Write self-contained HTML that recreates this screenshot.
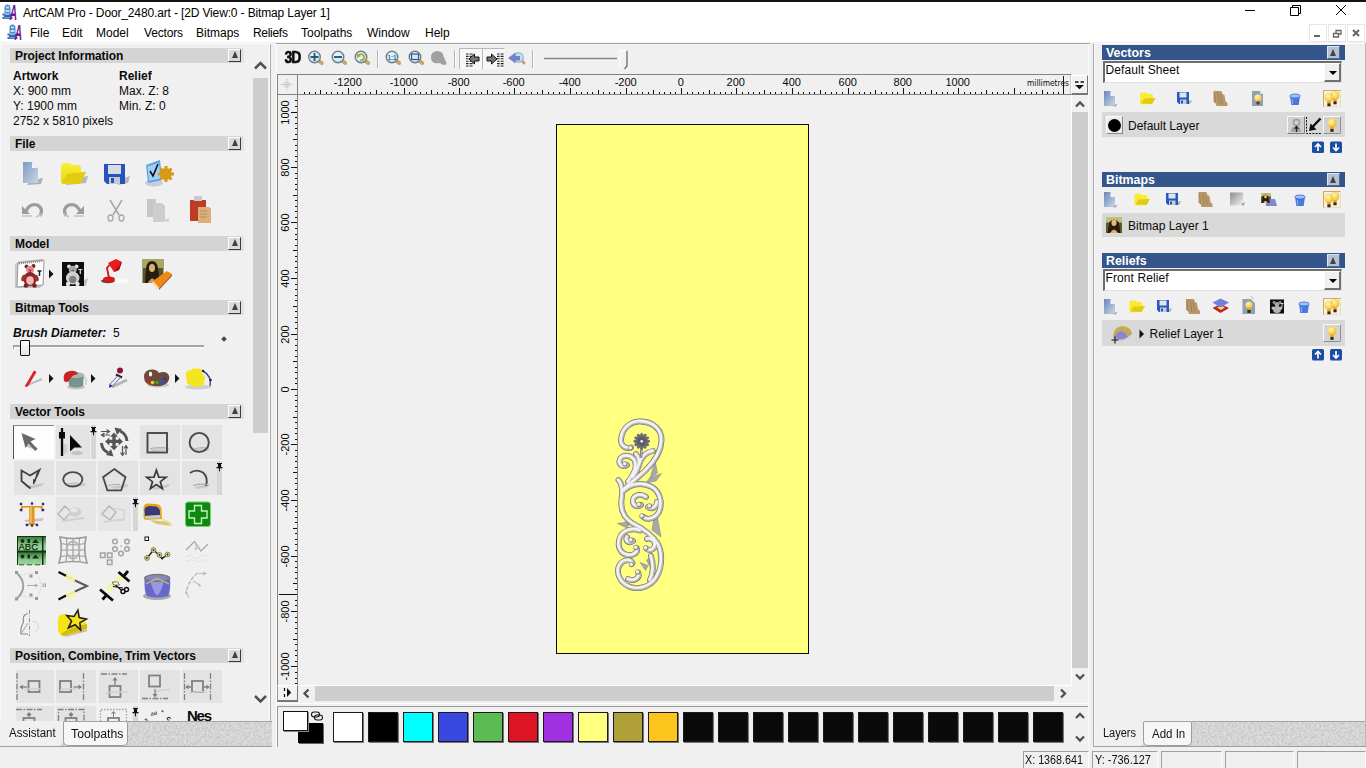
<!DOCTYPE html>
<html><head><meta charset="utf-8"><title>ArtCAM Pro</title>
<style>
html,body{margin:0;padding:0}
body{width:1366px;height:768px;position:relative;overflow:hidden;background:#f0f0f0;font-family:"Liberation Sans",sans-serif;font-size:12px;color:#000}
div,span,svg,b,i{position:absolute;box-sizing:border-box}
.t{white-space:nowrap}
.hd{left:10px;width:234px;height:15px;background:linear-gradient(90deg,#d4d4d4 0,#d4d4d4 231px,#e2e2e2 231px)}
.cb{width:13px;height:13px;background:#dadada;border:1px solid #fff;border-right-color:#3c3c3c;border-bottom-color:#3c3c3c}
.cb i{left:2.5px;top:0.5px;width:0;height:0;border-left:3.5px solid transparent;border-right:3.5px solid transparent;border-bottom:7.5px solid #404040}
.rh{left:1102px;width:243px;height:15px;background:#34558b}
.cb2{width:13px;height:13px;background:#b4c0d4;border:1px solid #dfe6f0;border-right-color:#5a6a86;border-bottom-color:#5a6a86}
.cb2 i{left:2px;top:2px;width:0;height:0;border-left:3.5px solid transparent;border-right:3.5px solid transparent;border-bottom:7px solid #444}
.dd{left:1103px;width:239px;height:22px;background:#fff;border:1px solid #e0e0e0;border-top:2px solid #6d6d6d;border-left:2px solid #6d6d6d}
.ddb{width:17px;height:19px;background:#f0f0f0;border:1px solid #fff;border-right:2px solid #707070;border-bottom:2px solid #707070}
.ddb i{left:4px;top:7px;width:0;height:0;border-left:4px solid transparent;border-right:4px solid transparent;border-top:4px solid #000}
.lr{left:1102px;width:243px;height:25px;background:#d9d9d9}
.sw{top:712px;width:30px;height:30px;border:1px solid #1a1a1a;box-shadow:1px 1px 0 #777}
.ti{width:40px;height:34px;background:#e4e4e4}
</style></head><body>

<div style="left:0px;top:0px;width:1366px;height:2px;background:#141414;"></div>
<div style="left:0px;top:2px;width:1366px;height:40px;background:#fff;"></div>
<div style="left:0px;top:43px;width:272px;height:1px;background:#fbfbfb;"></div>
<div style="left:1094px;top:43px;width:272px;height:1px;background:#fbfbfb;"></div>
<svg style="left:2px;top:3px" width="16" height="17" viewBox="0 0 16 17"><path d="M2.500 10 L2.500 5 Q2.500 1.500 5.500 1.500 Q8.500 1.500 8.500 5 L8.500 10 Z" fill="#4a8ad0"/><path d="M4 3.500 h3 v2 h-3z M3.500 7 h4 v2 h-4z" fill="#bfe0f8"/><path d="M0.500 10.500 h9.500 v2 h-1 v1.500 h1.500 v2 h-10 v-2 h1.500 v-1.500 h-1.500 z" fill="#3468b4"/><path d="M2.500 11.500 h5 M2 14.800 h7" stroke="#9cc8f0" stroke-width="0.800"/><text x="11.300" y="16.500" text-anchor="middle" font-family="Liberation Sans,sans-serif" font-size="22.500" font-weight="bold" font-style="italic" fill="#6a1a8c" transform="translate(11.300 0) scale(0.450 1) translate(-11.300 0)">A</text></svg>
<svg style="left:7px;top:23px" width="16" height="17" viewBox="0 0 16 17"><path d="M2.500 10 L2.500 5 Q2.500 1.500 5.500 1.500 Q8.500 1.500 8.500 5 L8.500 10 Z" fill="#4a8ad0"/><path d="M4 3.500 h3 v2 h-3z M3.500 7 h4 v2 h-4z" fill="#bfe0f8"/><path d="M0.500 10.500 h9.500 v2 h-1 v1.500 h1.500 v2 h-10 v-2 h1.500 v-1.500 h-1.500 z" fill="#3468b4"/><path d="M2.500 11.500 h5 M2 14.800 h7" stroke="#9cc8f0" stroke-width="0.800"/><text x="11.300" y="16.500" text-anchor="middle" font-family="Liberation Sans,sans-serif" font-size="22.500" font-weight="bold" font-style="italic" fill="#6a1a8c" transform="translate(11.300 0) scale(0.450 1) translate(-11.300 0)">A</text></svg>
<div class="t" style="left:23px;top:7px;font-size:12px;line-height:12px;color:#000;letter-spacing:-0.14px;">ArtCAM Pro - Door_2480.art - [2D View:0 - Bitmap Layer 1]</div>
<div class="t" style="left:30px;top:27px;font-size:12px;line-height:12px;color:#000;">File</div>
<div class="t" style="left:62px;top:27px;font-size:12px;line-height:12px;color:#000;">Edit</div>
<div class="t" style="left:96px;top:27px;font-size:12px;line-height:12px;color:#000;">Model</div>
<div class="t" style="left:144px;top:27px;font-size:12px;line-height:12px;color:#000;letter-spacing:-0.15px;">Vectors</div>
<div class="t" style="left:196px;top:27px;font-size:12px;line-height:12px;color:#000;">Bitmaps</div>
<div class="t" style="left:253px;top:27px;font-size:12px;line-height:12px;color:#000;letter-spacing:-0.3px;">Reliefs</div>
<div class="t" style="left:301px;top:27px;font-size:12px;line-height:12px;color:#000;">Toolpaths</div>
<div class="t" style="left:367px;top:27px;font-size:12px;line-height:12px;color:#000;">Window</div>
<div class="t" style="left:425px;top:27px;font-size:12px;line-height:12px;color:#000;">Help</div>
<svg style="left:1240px;top:2px" width="126" height="20" viewBox="0 0 126 20" fill="none" stroke="#000" stroke-width="1"><path d="M5 8.5 H15"/><path d="M50.5 5.5 H58.5 V13.5 H50.5 Z" transform="translate(0,0)"/><path d="M52.5 5.5 V3.5 H60.5 V11.5 H58.5"/><path d="M96 3 L106 13 M106 3 L96 13"/></svg>
<div style="left:1309px;top:24px;width:18px;height:18px;background:#fff;border:1px solid #e6e6e6"></div>
<div style="left:1328px;top:24px;width:18px;height:18px;background:#fff;border:1px solid #e6e6e6"></div>
<div style="left:1347px;top:24px;width:18px;height:18px;background:#fff;border:1px solid #e6e6e6"></div>
<svg style="left:1309px;top:24px" width="57" height="18" viewBox="0 0 57 18" fill="none" stroke="#666" stroke-width="1.6"><path d="M5 12 H11" stroke-width="2"/><path d="M24.5 9.5 h5 v3.5 h-5 z M27 9 v-2.5 h5 v3.5 h-2" stroke-width="1.3"/><path d="M44 6 L50 12 M50 6 L44 12" stroke-width="2"/></svg>
<div style="left:0px;top:44px;width:1px;height:703px;background:#fafafa;"></div>
<div style="left:269px;top:44px;width:1px;height:677px;background:#fafafa;"></div>
<div style="left:270px;top:44px;width:1px;height:677px;background:#ababab;"></div>
<div class="hd" style="top:48px"></div>
<div class="t" style="left:15px;top:50px;font-size:12px;line-height:12px;color:#0a0a0a;font-weight:bold;letter-spacing:-0.1px;">Project Information</div>
<div class="cb" style="left:228px;top:49px"><i></i></div>
<div class="hd" style="top:136px"></div>
<div class="t" style="left:15px;top:138px;font-size:12px;line-height:12px;color:#0a0a0a;font-weight:bold;letter-spacing:-0.1px;">File</div>
<div class="cb" style="left:228px;top:137px"><i></i></div>
<div class="hd" style="top:236px"></div>
<div class="t" style="left:15px;top:238px;font-size:12px;line-height:12px;color:#0a0a0a;font-weight:bold;letter-spacing:-0.1px;">Model</div>
<div class="cb" style="left:228px;top:237px"><i></i></div>
<div class="hd" style="top:300px"></div>
<div class="t" style="left:15px;top:302px;font-size:12px;line-height:12px;color:#0a0a0a;font-weight:bold;letter-spacing:-0.1px;">Bitmap Tools</div>
<div class="cb" style="left:228px;top:301px"><i></i></div>
<div class="hd" style="top:404px"></div>
<div class="t" style="left:15px;top:406px;font-size:12px;line-height:12px;color:#0a0a0a;font-weight:bold;letter-spacing:-0.1px;">Vector Tools</div>
<div class="cb" style="left:228px;top:405px"><i></i></div>
<div class="hd" style="top:648px"></div>
<div class="t" style="left:15px;top:650px;font-size:12px;line-height:12px;color:#0a0a0a;font-weight:bold;letter-spacing:-0.1px;">Position, Combine, Trim Vectors</div>
<div class="cb" style="left:228px;top:649px"><i></i></div>
<div class="t" style="left:13px;top:70px;font-size:12px;line-height:12px;color:#0a0a0a;font-weight:bold;">Artwork</div>
<div class="t" style="left:119px;top:70px;font-size:12px;line-height:12px;color:#0a0a0a;font-weight:bold;">Relief</div>
<div class="t" style="left:13px;top:85px;font-size:12px;line-height:12px;color:#0a0a0a;">X: 900 mm</div>
<div class="t" style="left:119px;top:85px;font-size:12px;line-height:12px;color:#0a0a0a;">Max. Z: 8</div>
<div class="t" style="left:13px;top:100px;font-size:12px;line-height:12px;color:#0a0a0a;">Y: 1900 mm</div>
<div class="t" style="left:119px;top:100px;font-size:12px;line-height:12px;color:#0a0a0a;">Min. Z: 0</div>
<div class="t" style="left:13px;top:115px;font-size:12px;line-height:12px;color:#0a0a0a;">2752 x 5810 pixels</div>
<div class="t" style="left:13px;top:327px;font-size:12px;line-height:12px;color:#0a0a0a;font-weight:bold;font-style:italic;">Brush Diameter:</div>
<div class="t" style="left:113px;top:327px;font-size:12px;line-height:12px;color:#0a0a0a;">5</div>
<div style="left:13px;top:345px;width:191px;height:2px;background:#a4a4a4;"></div>
<div style="left:13px;top:347px;width:192px;height:1px;background:#fcfcfc;"></div>
<div style="left:13px;top:345px;width:1px;height:4px;background:#a4a4a4;"></div>
<div style="left:20px;top:340px;width:10px;height:16px;background:linear-gradient(180deg,#fff,#e4e4e4);border:1px solid #111;border-radius:1px"></div>
<div style="left:222px;top:337px;width:4px;height:4px;background:#3a4a6c;transform:rotate(45deg)"></div>
<div style="left:252px;top:56px;width:17px;height:653px;background:#f0f0f0;"></div>
<div style="left:253px;top:78px;width:15px;height:355px;background:#cdcdcd;"></div>
<svg style="left:252px;top:56px" width="17" height="653" viewBox="0 0 17 653" fill="none" stroke="#505050" stroke-width="2.500"><path d="M3 12.500 L8.500 7 L14 12.500"/><path d="M3 640 L8.500 645.500 L14 640"/></svg>
<div style="left:13px;top:425px;width:41px;height:34px;background:#fdfdfd;border-left:1px solid #555;border-top:1px solid #888"></div>
<div style="left:56px;top:425px;width:34px;height:34px;background:#e3e3e3;"></div>
<div style="left:91px;top:425px;width:5px;height:34px;background:#d6d6d6;"></div>
<div style="left:140px;top:425px;width:40px;height:34px;background:#e3e3e3;"></div>
<div style="left:181.5px;top:425px;width:40px;height:34px;background:#e3e3e3;"></div>
<div style="left:13.5px;top:461px;width:40.5px;height:34px;background:#e3e3e3;"></div>
<div style="left:56px;top:461px;width:40px;height:34px;background:#e3e3e3;"></div>
<div style="left:98px;top:461px;width:40px;height:34px;background:#e3e3e3;"></div>
<div style="left:140px;top:461px;width:40px;height:34px;background:#e3e3e3;"></div>
<div style="left:181.5px;top:461px;width:35px;height:34px;background:#e3e3e3;"></div>
<div style="left:217px;top:461px;width:5px;height:34px;background:#d6d6d6;"></div>
<div style="left:56px;top:497px;width:40px;height:34px;background:#e6e6e6;"></div>
<div style="left:98px;top:497px;width:33px;height:34px;background:#e6e6e6;"></div>
<div style="left:133px;top:497px;width:5px;height:34px;background:#d6d6d6;"></div>
<div style="left:15.5px;top:670px;width:38.5px;height:33px;background:#e3e3e3;"></div>
<div style="left:56px;top:670px;width:40px;height:33px;background:#e3e3e3;"></div>
<div style="left:98.5px;top:670px;width:39px;height:33px;background:#e3e3e3;"></div>
<div style="left:140px;top:670px;width:40px;height:33px;background:#e3e3e3;"></div>
<div style="left:181.5px;top:670px;width:40px;height:33px;background:#e3e3e3;"></div>
<div style="left:15.5px;top:705.5px;width:38.5px;height:16px;background:#e3e3e3;"></div>
<div style="left:56px;top:705.5px;width:40px;height:16px;background:#e3e3e3;"></div>
<div style="left:133px;top:705.5px;width:5px;height:16px;background:#d6d6d6;"></div>
<svg style="left:0;top:44px" width="250" height="677" viewBox="0 44 250 677">
<defs>
<linearGradient id="gdoc" x1="0" y1="0" x2="1" y2="1"><stop offset="0" stop-color="#7f99c2"/><stop offset="1" stop-color="#c9d6e8"/></linearGradient>
<linearGradient id="gfold" x1="0" y1="0" x2="0" y2="1"><stop offset="0" stop-color="#fbef3a"/><stop offset="1" stop-color="#e8d410"/></linearGradient>
<filter id="bl"><feGaussianBlur stdDeviation="0.5"/></filter>
<filter id="bl1"><feGaussianBlur stdDeviation="1"/></filter>
</defs>
<g filter="url(#bl)">
<path d="M30 181 L43 178 L41 184 L27 185 Z" fill="#b0b0b0"/>
<path d="M23 162 H32 L38 168 V183 H23 Z" fill="url(#gdoc)"/><path d="M32 162 L38 168 H32 Z" fill="#eef3fa"/>
<path d="M66 180 L88 176 L86 183 L66 185 Z" fill="#b8b8b8"/>
<path d="M61 166 Q61 163 64 163 L70 163 L72 165 L79 165 Q81 165 81 168 L81 172 L86 172 L80 184 L63 184 Q61 184 61 181 Z" fill="url(#gfold)"/><path d="M62 183 L67 174 L86 172 L80 184 Z" fill="#e2cc10"/>
<path d="M118 180 L130 176 L128 183 L118 185 Z" fill="#b8b8b8"/>
<path d="M104 164 H125 V184 H107 L104 181 Z" fill="#2753bd"/><rect x="108" y="165" width="13" height="9" fill="#d8dde4"/><rect x="109" y="177" width="11" height="7" fill="#c4c8d0"/><rect x="111" y="178" width="3" height="5" fill="#2753bd"/>
<ellipse cx="154" cy="183" rx="9" ry="3.5" fill="#c8cce0"/><path d="M146 165 L160 160 L162 180 L148 183 Z" fill="#5aa0e0"/><path d="M147.5 166.5 L159 162.5 L160.5 178.500 L149 181 Z" fill="#9fd0f4"/><path d="M150 171 L153 176 L158 164" stroke="#111" stroke-width="1.6" fill="none"/>
<circle cx="166" cy="174" r="6" fill="#d89a18"/><circle cx="166" cy="174" r="2" fill="#5a4010"/><path d="M166 166v16M158 174h16M160.500 168.500l11 11M171.500 168.500l-11 11" stroke="#d89a18" stroke-width="3"/>
</g>
<g filter="url(#bl)">
<path d="M22 206 L22 214 L30 214 Z" fill="#9c9c9c"/><path d="M26 211 Q30 203 37 205 Q44 208 40 216" stroke="#9c9c9c" stroke-width="3.2" fill="none"/><path d="M22 216 h10 M36 217 l6 -3" stroke="#c4c4c4" stroke-width="1.5"/>
<path d="M84 206 L84 214 L76 214 Z" fill="#9c9c9c"/><path d="M80 211 Q76 203 69 205 Q62 208 66 216" stroke="#9c9c9c" stroke-width="3.2" fill="none"/><path d="M74 216 h10 M64 214 l5 3" stroke="#c4c4c4" stroke-width="1.5"/>
<path d="M110 200 L119 215 M122 200 L113 215" stroke="#a8a8a8" stroke-width="1.6" fill="none"/><ellipse cx="110.500" cy="218" rx="2.500" ry="3" fill="none" stroke="#a8a8a8" stroke-width="1.3"/><ellipse cx="121.500" cy="218" rx="2.500" ry="3" fill="none" stroke="#a8a8a8" stroke-width="1.3"/>
<path d="M147 199 H156 V217 H147 Z" fill="#c6c6c6"/><path d="M153 203 H162 L165 206 V222 H153 Z" fill="#cdcdcd"/><path d="M160 221 L170 218 L168 222 Z" fill="#d4d4d4"/>
<path d="M190 200 H206 V221 H190 Z" fill="#c03a26"/><rect x="194" y="196" width="8" height="5" fill="#c8c8c8"/><path d="M198 207 H209 L211 209 V223 H198 Z" fill="#dcae78"/><path d="M200 211 h7 M200 214 h7 M200 217 h7" stroke="#b08850" stroke-width="0.8"/>
</g>
<g filter="url(#bl)">
<path d="M15 264 L19 261 L43 259 L44 284 L40 288 L15 288 Z" fill="#c8c8c8"/>
<path d="M18 263 L44 260 L43 285 L17 287 Z" fill="#fff" stroke="#9a9a9a" stroke-width="1"/>
<path d="M19 263.500 L43 261" stroke="#888" stroke-width="2" stroke-dasharray="1 1"/>
<circle cx="26.500" cy="266.500" r="2" fill="#7c2020"/><circle cx="33.500" cy="266" r="2" fill="#7c2020"/><ellipse cx="30" cy="269.500" rx="4" ry="3.800" fill="#e88888"/><circle cx="30" cy="270.500" r="1.200" fill="#a03030"/><ellipse cx="30" cy="279" rx="6.500" ry="7" fill="#8c2626"/><ellipse cx="30" cy="280.500" rx="3.800" ry="4.200" fill="#f4b8b8"/><ellipse cx="23.500" cy="278" rx="2" ry="3.500" fill="#a03030" transform="rotate(20 23.500 278)"/><ellipse cx="36.500" cy="278" rx="2" ry="3.500" fill="#a03030" transform="rotate(-20 36.500 278)"/><circle cx="26" cy="285.500" r="2.300" fill="#7c2020"/><circle cx="34.500" cy="285.500" r="2.300" fill="#7c2020"/>
<path d="M37.500 271 h4 M39.500 271 v5" stroke="#222" stroke-width="1.5"/>
<path d="M84 280 L88 278 L86 286 L80 286 Z" fill="#c0c0c0"/>
<rect x="62" y="262" width="22" height="24" fill="#0a0a0a"/>
<circle cx="69" cy="266.500" r="2" fill="#e0e0e0"/><circle cx="76.500" cy="266.500" r="2" fill="#e0e0e0"/><ellipse cx="72.700" cy="269.500" rx="4" ry="3.800" fill="#a8a8a8"/><circle cx="72.700" cy="270.500" r="1.300" fill="#707070"/><ellipse cx="72.700" cy="278" rx="6.800" ry="6.500" fill="#d0d0d0"/><ellipse cx="72.700" cy="279.500" rx="3.600" ry="3.800" fill="#808080"/><circle cx="68" cy="284" r="2.200" fill="#e4e4e4"/><circle cx="77.500" cy="284" r="2.200" fill="#e4e4e4"/>
<text x="78" y="273.500" font-family="Liberation Sans,sans-serif" font-size="7.500" font-weight="bold" fill="#eee">T</text>
<ellipse cx="118" cy="281" rx="11" ry="2.500" fill="#fafafa"/><ellipse cx="108" cy="281" rx="7" ry="2.200" fill="#8a3030"/>
<ellipse cx="109" cy="279" rx="6" ry="2.500" fill="#e01818"/><path d="M109 278 L107 268 L112 262" stroke="#c81414" stroke-width="1.800" fill="none"/><path d="M108 263 L116 259 L122 262 L119 270 L114 272 Z" fill="#e81c1c"/><path d="M114 272 L119 270 L122 262" fill="#a01010"/>
<rect x="142.500" y="259" width="21" height="24" fill="#5a5a28"/><rect x="142.500" y="259" width="21" height="9" fill="#a8a860"/><path d="M145 283 L146 268 Q147 261 152 261 Q157 261 158 268 L160 283 Z" fill="#2a1c10"/><ellipse cx="152" cy="268" rx="3" ry="4" fill="#d8b078"/><path d="M148 283 Q152 274 157 283 Z" fill="#c09860"/>
<path d="M153 281 L167 271 L172 274 L159 288 Z" fill="#f08818"/><path d="M153 281 L159 288 L158 289.500 L152 283 Z" fill="#f8d8a0"/><path d="M159 288 L172 274 L172 276 L159 290 Z" fill="#b85808"/>
</g>
<path d="M49 269.5 L53.5 274 L49 278.5 Z" fill="#111"/>
<g filter="url(#bl)">
<path d="M25 386 L42 379" stroke="#bdbdbd" stroke-width="2"/><path d="M25.500 385 L34 370.500 L36.500 372 L28 386.200 L25 387 Z" fill="#dc2028"/>
<ellipse cx="76" cy="387" rx="9" ry="2.500" fill="#c4c4c4"/><path d="M68 376 L84 374 L83 386 Q76 389 69 386 Z" fill="#7a948c"/><ellipse cx="76" cy="375" rx="8" ry="3" fill="#aab8b4"/><path d="M64 381 Q62 372 70 371 Q76 370 78 374 Q72 375 70 379 Q68 384 64 381 Z" fill="#cc2420"/><path d="M84 376 Q88 380 85 385" stroke="#d0d0d0" stroke-width="1.500" fill="none"/>
<path d="M112 387 L127 380" stroke="#b4b4b4" stroke-width="2.500"/><circle cx="120" cy="370.500" r="3" fill="#8c1838"/><path d="M116 374.500 L122 377.500" stroke="#401020" stroke-width="2"/><path d="M117.500 376 L120.500 377.500 L112.500 386 L109.500 387 L110 384 Z" fill="#e8ecf8" stroke="#3848a8" stroke-width="0.800"/><path d="M110 384 L112.500 386 L109 388 Z" fill="#2030a0"/>
<ellipse cx="158" cy="385" rx="11" ry="2.500" fill="#c8c8c8"/><path d="M144 377 Q144 369 153 369.500 Q158 370 159 373 Q163 371 167 373 Q171 376 168 382 Q164 387 154 386 Q144 385 144 377 Z" fill="#6c4a3a"/><ellipse cx="150.500" cy="374" rx="1.700" ry="2.600" fill="#f4f0e8"/><circle cx="148" cy="381" r="1.800" fill="#d02020"/><circle cx="152.500" cy="382.500" r="1.800" fill="#e8d020"/><circle cx="157" cy="382.500" r="1.800" fill="#28a838"/><circle cx="161.500" cy="381.500" r="1.800" fill="#2858d0"/><circle cx="165" cy="379" r="1.800" fill="#4030a0"/>
<ellipse cx="198" cy="387" rx="13" ry="2.500" fill="#cfcfcf"/><path d="M203 371 Q212 376 210 386" stroke="#3848a0" stroke-width="1.500" fill="none"/><circle cx="203" cy="371" r="1.300" fill="#223"/><circle cx="210.500" cy="380" r="1.300" fill="#223"/><path d="M186 376 Q185 370 191 370 Q193 367 198 369 Q203 368 202 374 Q207 376 204 381 Q206 386 199 386 Q196 389 192 385 Q185 385 187 380 Z" fill="#f4e420"/>
</g>
<path d="M49 374.0 L53.5 378.5 L49 383.0 Z" fill="#111"/>
<path d="M91 374.0 L95.5 378.5 L91 383.0 Z" fill="#111"/>
<path d="M175 374.0 L179.5 378.5 L175 383.0 Z" fill="#111"/>
<g filter="url(#bl)">
<path d="M24 446 L36 450 L38 448 L28 444 Z" fill="#c6c6c6"/>
<path d="M21.500 433 L35.500 439 L30.500 441.500 L37.500 449 L35 451 L28.500 443.500 L25.500 448 Z" fill="#686868"/>
</g>
<g filter="url(#bl)"><ellipse cx="77" cy="453" rx="6" ry="2" fill="#c4c4c4"/><ellipse cx="65" cy="449" rx="2.500" ry="5" fill="#cfcfcf"/></g>
<path d="M62 428 V456" stroke="#0a0a0a" stroke-width="2.300"/><rect x="59" y="432" width="6" height="6.500" fill="#0a0a0a"/><path d="M70 435 L70 451.500 L74.500 447.500 L82 447.500 Z" fill="#0a0a0a"/>
<path d="M91.0 427 h5 v1 h-1 v3 h1.5 v1.2 h-2.5 v3 h-1 v-3 h-2.5 v-1.2 h1.5 v-3 h-1 z" fill="#111"/>
<g fill="#555" stroke="none">
<path d="M114 432.500 l4 4.200 h-2.300 v3 h3 v-2.300 l4.200 4 l-4.200 4 v-2.300 h-3 v3 h2.300 l-4 4.200 l-4 -4.200 h2.300 v-3 h-3 v2.300 l-4.200 -4 l4.200 -4 v2.300 h3 v-3 h-2.300 z"/>
</g>
<g fill="none" stroke="#555" stroke-width="3"><path d="M120 431 Q126.500 434 127 441"/><path d="M108 452.500 Q102 450 101.500 443"/></g>
<path d="M114.500 427.500 l7.500 1.500 l-5 6 z M113.500 456.500 l-7.500 -1.500 l5 -6 z" fill="#555"/>
<path d="M101 431.500 h8 M106.500 429.500 l3 2 l-3 2 M110 435 h-8 M104.500 433 l-3 2 l3 2" stroke="#555" stroke-width="1.200" fill="none"/>
<path d="M122.500 446 v9 M120.500 452.500 l2 3 l2 -3 M126 455 v-9 M124 448.500 l2 -3 l2 3" stroke="#555" stroke-width="1.200" fill="none"/>
<g filter="url(#bl)">
<path d="M150 449 L168 447 L170 450 L152 452 Z" fill="#cacaca"/><path d="M192 450 L208 447 L210 450 L196 453 Z" fill="#cacaca"/>
</g>
<rect x="147.500" y="433" width="19.500" height="19.500" fill="none" stroke="#484848" stroke-width="1.900"/><path d="M150 448.500 q8 -1.500 15 -1" stroke="#b0b0b0" stroke-width="1" fill="none"/>
<circle cx="199.200" cy="442.500" r="9.600" fill="none" stroke="#484848" stroke-width="1.900"/><path d="M193 449 q6 -1.500 12 -1.500" stroke="#b0b0b0" stroke-width="1" fill="none"/>
<g filter="url(#bl)"><path d="M24 486 L44 483 L42 486 L30 489 Z" fill="#c8c8c8"/><path d="M70 485 L86 483 L84 486 L74 487 Z" fill="#c8c8c8"/><path d="M110 487 L128 484 L127 487 L114 489 Z" fill="#c8c8c8"/><path d="M152 488 L170 484 L168 487 L156 490 Z" fill="#c8c8c8"/><path d="M194 487 L210 484 L208 487 L198 489 Z" fill="#c8c8c8"/></g>
<path d="M30.500 488.500 L21.500 481 L21.500 470.500 L30 475.500 L39.500 470 L33.500 483.500" fill="none" stroke="#404040" stroke-width="1.800" stroke-linejoin="miter"/><path d="M39.500 470 L35.500 475 L37.800 476.200 Z M33 484.500 L33 479 L36.200 480.500 Z" fill="#404040"/>
<ellipse cx="72.800" cy="479.300" rx="9.600" ry="7.200" fill="none" stroke="#484848" stroke-width="1.900"/><path d="M67 484 q6 -1 11 -1" stroke="#b0b0b0" stroke-width="1" fill="none"/>
<path d="M114.3 469.0 L125.5 477.2 L121.2 490.3 L107.4 490.3 L103.1 477.2 Z" fill="none" stroke="#484848" stroke-width="1.800"/><path d="M108 485.500 q6 -1.500 12 -1" stroke="#b0b0b0" stroke-width="1" fill="none"/>
<path d="M156.4 470.2 L158.8 477.1 L166.1 477.2 L160.3 481.7 L162.4 488.7 L156.4 484.5 L150.4 488.7 L152.5 481.7 L146.7 477.2 L154.0 477.1 Z" fill="none" stroke="#3a3a3a" stroke-width="1.700"/>
<path d="M190 473 Q196 468.500 203 472.500 Q208.500 477.500 206 486" fill="none" stroke="#484848" stroke-width="1.900"/><path d="M193 485.500 q7 -2 14 -1" stroke="#aaa" stroke-width="1.200" fill="none"/>
<path d="M217.0 463 h5 v1 h-1 v3 h1.5 v1.2 h-2.5 v3 h-1 v-3 h-2.5 v-1.2 h1.5 v-3 h-1 z" fill="#111"/>
<g filter="url(#bl)">
<path d="M24 520 L44 518 L42 521 L26 522 Z" fill="#c4c4c4"/>
<text x="32" y="525" text-anchor="middle" font-family="Liberation Serif,serif" font-size="30.500" font-weight="bold" fill="#e8941c" transform="translate(32 0) scale(1.120 1) translate(-32 0)">T</text><path d="M31 507 V523" stroke="#f8c060" stroke-width="1.500"/>
<rect x="19.8" y="502.8" width="2.400" height="2.400" fill="#2a2a8a"/>
<rect x="41.8" y="502.8" width="2.400" height="2.400" fill="#2a2a8a"/>
<rect x="19.8" y="508.8" width="2.400" height="2.400" fill="#2a2a8a"/>
<rect x="41.8" y="508.8" width="2.400" height="2.400" fill="#2a2a8a"/>
<rect x="25.8" y="523.8" width="2.400" height="2.400" fill="#2a2a8a"/>
<rect x="35.8" y="523.8" width="2.400" height="2.400" fill="#2a2a8a"/>
<rect x="30.8" y="502.3" width="2.400" height="2.400" fill="#2a2a8a"/>
<rect x="30.8" y="524.3" width="2.400" height="2.400" fill="#2a2a8a"/>
<path d="M58 514 L65 506 L71 512 L64 520 Z" fill="none" stroke="#b4b4b4" stroke-width="1.300"/><ellipse cx="75" cy="512" rx="6" ry="5" fill="#d0d0d0"/><ellipse cx="74" cy="510" rx="3.500" ry="2.500" fill="#e8e8e8"/><path d="M62 521 L84 518" stroke="#cfcfcf" stroke-width="2"/>
<path d="M102 514 L109 506 L116 512 L110 520 Z" fill="none" stroke="#b4b4b4" stroke-width="1.300"/><path d="M112 508 L124 510 L124 520 L114 521" fill="none" stroke="#d0d0d0" stroke-width="1.200"/><path d="M104 522 L124 519" stroke="#d4d4d4" stroke-width="2"/>
<path d="M150 520 L170 522 L172 526 L156 524 Z" fill="#d8c878"/><path d="M143.500 508 Q143.500 503.500 148 503.500 L156 504 Q161 504.500 161.500 509 L162 519 L146 520 Q143.500 520 143.500 516 Z" fill="#e8a818"/><path d="M144.500 509 Q146 506 150 506 L156 506.500 Q160 508 160 512 L160 515 L145 516 Z" fill="#38387c"/><path d="M145 516 L160 515 L160 518 L146 519 Z" fill="#c8c8d0"/><path d="M162 519 L170 523 L171 526" stroke="#f0e090" stroke-width="1.500" fill="none"/>
</g>
<path d="M133.0 499 h5 v1 h-1 v3 h1.5 v1.2 h-2.5 v3 h-1 v-3 h-2.5 v-1.2 h1.5 v-3 h-1 z" fill="#111"/>
<rect x="185.500" y="502" width="25" height="24.500" rx="2.500" fill="#0c8a0c" stroke="#7cc87c" stroke-width="1"/>
<path d="M194.500 505.500 h7 v5.500 h5.500 v7 h-5.500 v5.500 h-7 v-5.500 h-5.500 v-7 h5.500 z" fill="#0c8a0c" stroke="#c8f0c8" stroke-width="1.400"/>
<defs><linearGradient id="gabc" x1="0" y1="0" x2="0" y2="1"><stop offset="0" stop-color="#3c7c3c"/><stop offset="0.6" stop-color="#8cc88c"/><stop offset="1" stop-color="#a4d8a4"/></linearGradient></defs><rect x="17" y="536" width="29" height="29" fill="#143014"/><rect x="18" y="537" width="24" height="13.500" fill="url(#gabc)"/><rect x="43.500" y="537" width="2.500" height="13.500" fill="url(#gabc)"/><rect x="18" y="552.500" width="24" height="12.500" fill="url(#gabc)"/><rect x="43.500" y="552.500" width="2.500" height="12.500" fill="url(#gabc)"/>
<circle cx="22.500" cy="541" r="1.900" fill="#143014"/><rect x="27.500" y="539" width="2.500" height="4" fill="#143014"/><path d="M32 543 l3.500 -4 l3.500 4 z" fill="#143014"/>
<text x="18.500" y="550" font-family="Liberation Sans,sans-serif" font-size="9.500" fill="#0c2c0c" stroke="#0c2c0c" stroke-width="0.250">ABC</text>
<circle cx="22.500" cy="556.500" r="1.900" fill="#143014"/><rect x="27.500" y="554.500" width="2.500" height="4" fill="#143014"/><path d="M32 558.500 l3.500 -4 l3.500 4 z" fill="#143014"/>
<path d="M19 564.800 h5 M27 564.800 h5 M35 564.800 h5" stroke="#2c5c2c" stroke-width="1"/>
<g fill="none" stroke="#9a9a9a" stroke-width="1.100"><path d="M60 537 Q73 540 86 537 Q83 550 87 563 Q73 560 59 563 Q63 550 60 537 Z" stroke-width="1.600"/><path d="M61 543.500 Q73 546 85 543.500 M61.500 550 H84.500 M60.500 556.500 Q73 554.500 86 556.500 M66.500 538.500 Q68 550 66 561.500 M73 539 V561 M79.500 538.500 Q78 550 80 561.500"/><ellipse cx="73" cy="550" rx="6.500" ry="8.500" stroke="#b4b4b4" stroke-width="2"/></g>
<g fill="none" stroke="#a4a4a4" stroke-width="1.500">
<rect x="100.5" y="553" width="4.500" height="4.500"/>
<rect x="107.5" y="553" width="4.500" height="4.500"/>
<rect x="107.5" y="560" width="4.500" height="4.500"/>
<circle cx="115" cy="541.5" r="2.300"/>
<circle cx="127" cy="541.5" r="2.300"/>
<circle cx="115" cy="549" r="2.300"/>
<circle cx="127" cy="549" r="2.300"/>
<circle cx="121" cy="553.5" r="2.300"/>
</g><circle cx="121" cy="546" r="0.800" fill="#a4a4a4"/>
<rect x="145" y="537" width="3.500" height="3.500" fill="#fff" stroke="#111" stroke-width="1"/>
<path d="M147 558 L153.500 550 L159 555 L162 558.500 L167.500 554.500" fill="none" stroke="#222" stroke-width="1.400"/>
<circle cx="147" cy="558" r="2.400" fill="#ecec9c" stroke="#55551c" stroke-width="0.700"/><path d="M145.8 558 h2.400 M147 556.8 v2.400" stroke="#222" stroke-width="0.800"/>
<circle cx="153.5" cy="550" r="2.400" fill="#ecec9c" stroke="#55551c" stroke-width="0.700"/><path d="M152.3 550 h2.400 M153.5 548.8 v2.400" stroke="#222" stroke-width="0.800"/>
<circle cx="159.5" cy="555" r="2.400" fill="#ecec9c" stroke="#55551c" stroke-width="0.700"/><path d="M158.3 555 h2.400 M159.5 553.8 v2.400" stroke="#222" stroke-width="0.800"/>
<circle cx="167.5" cy="554.5" r="2.400" fill="#ecec9c" stroke="#55551c" stroke-width="0.700"/><path d="M166.3 554.5 h2.400 M167.5 553.3 v2.400" stroke="#222" stroke-width="0.800"/>
<path d="M160.500 557.500 l1.800 2.200 l1.800 -2.200 z" fill="#222"/>
<path d="M186 550 L194.500 541.500 L201 551 L208 544" fill="none" stroke="#a8a8a8" stroke-width="1.300"/><path d="M196 544 v6 M194.500 548 l1.500 2 l1.500 -2" stroke="#b8b8b8" stroke-width="0.900" fill="none"/><path d="M186 557 q4 -3 7 0 t7 0 t8 -1 M187 561 q5 -2 9 0 t10 -1" stroke="#d8d8d8" stroke-width="1" fill="none" stroke-dasharray="2 1.500"/>
<path d="M16.500 572.500 Q30 586 16.500 599" fill="none" stroke="#a0a0a0" stroke-width="2"/><path d="M27 585.500 h11" stroke="#a8a8a8" stroke-width="1"/><path d="M35 583.800 l3 1.700 l-3 1.700 z" fill="#a8a8a8"/><path d="M21 575 L36 572.500 M21 596 L36 598.500 M36 572.500 Q46 585 36 598.500" stroke="#d4d4d4" stroke-width="0.900" fill="none" stroke-dasharray="2 1.500"/>
<rect x="15.0" y="571.0" width="3" height="3" fill="#999"/>
<rect x="15.0" y="597.5" width="3" height="3" fill="#999"/>
<rect x="29.5" y="574.5" width="3" height="3" fill="#999"/>
<rect x="29.5" y="593.5" width="3" height="3" fill="#999"/>
<rect x="35.0" y="571.0" width="3" height="3" fill="#999"/>
<rect x="35.0" y="597.0" width="3" height="3" fill="#999"/>
<rect x="43" y="584" width="2.600" height="2.600" fill="none" stroke="#999" stroke-width="0.800"/>
<path d="M66 575.500 L75 580.500 M75 592.500 L66 598" stroke="#f4f4a8" stroke-width="5"/>
<path d="M58.500 572 L66 575.800 M58.500 599.500 L66 595.500" stroke="#0a0a0a" stroke-width="2.200"/><path d="M66 575.800 L75 580.500 M75 591 L66 595.500" stroke="#c8c860" stroke-width="0.800" stroke-dasharray="1 1"/><path d="M75 580.500 L87 586 L75 591.500" fill="none" stroke="#5a5a5a" stroke-width="2"/>
<path d="M108 590 L124 574" stroke="#f4f4a8" stroke-width="6"/>
<path d="M100 589.500 L113 600.500 M102.500 599.500 L107.500 594 M118.500 572 L129.500 581.500 M128 571 L123 577" stroke="#0a0a0a" stroke-width="2.800"/>
<path d="M113 582.500 L121 590 M113 586.500 L123 588" stroke="#111" stroke-width="1.100"/><circle cx="123" cy="591.500" r="2" fill="#fff" stroke="#0a0a0a" stroke-width="1.500"/><circle cx="126.500" cy="589.500" r="2" fill="#fff" stroke="#0a0a0a" stroke-width="1.500"/><path d="M112.500 582 h5 l2 3 h-6 z" fill="#fff" stroke="#222" stroke-width="0.600"/>
<g filter="url(#bl)"><ellipse cx="157" cy="596" rx="14" ry="4" fill="#a8a8a8"/><path d="M144.500 578 Q144 592 147 596 Q157 599 168 596 Q171 590 170 578 Z" fill="#6868cc"/><path d="M150 578 Q152 590 157 596 Q163 590 164 578 Z" fill="#9898e4"/><ellipse cx="157.200" cy="578" rx="12.500" ry="3.500" fill="#8888c0" stroke="#787878" stroke-width="1.300"/><path d="M146 584 Q151 581 157 578.500 Q163 581 169 584" fill="none" stroke="#c8c85c" stroke-width="1.200"/></g>
<path d="M186.500 590 Q190 579 197 573.500" fill="none" stroke="#b8b8b8" stroke-width="1.400" stroke-dasharray="4 1.500"/><path d="M197 573.500 h8 M203 572 l3 1.500 l-3 1.500 M193 581 l7 4 M186.500 592 l2.500 6" stroke="#c0c0c0" stroke-width="1.100" fill="none"/><path d="M186 590 l-1 4 l2.500 -1 z M199 584 l2.500 2 l-3 0.500 z" fill="#b0b0b0"/>
<path d="M29.500 610 V636" stroke="#888" stroke-width="0.900" stroke-dasharray="4 1.500 1 1.500"/><path d="M27.500 613.500 Q22 615 23.500 622 Q20 628 21 634 H28" fill="none" stroke="#888" stroke-width="1.100"/><path d="M21.500 633 L28 623" stroke="#999" stroke-width="0.900"/><path d="M32 622 Q38 620 38.500 627 Q38 631 35 632" fill="none" stroke="#d8d8d8" stroke-width="1"/>
<g filter="url(#bl)"><path d="M62 634 L84 628 L88 631 L66 637 Z" fill="#c8c4a0"/><path d="M58 620 Q58 614 64 614 L86 622 L87 629 L62 636 Q58 634 58 628 Z" fill="#f4e418"/><path d="M62 636 L87 629 L87 624 Q72 627 62 633 Z" fill="#d4bc0c"/></g>
<path d="M77.9 610.2 L79.2 617.5 L86.4 619.1 L79.9 622.6 L80.6 630.0 L75.2 624.8 L68.4 627.8 L71.6 621.1 L66.8 615.5 L74.1 616.5 Z" fill="#f4e418" stroke="#222" stroke-width="1.600"/>
<g fill="none" stroke="#808080" stroke-width="1.300">
<path d="M17 673 V700" stroke-dasharray="6 1.500 1.500 1.500"/><rect x="28.500" y="681" width="11" height="11" stroke-width="1.800"/><path d="M20 687 h7"/>
<path d="M83.500 673 V700" stroke-dasharray="6 1.500 1.500 1.500"/><rect x="60" y="681" width="11" height="11" stroke-width="1.800"/><path d="M73.500 687 h7"/>
<path d="M101 674 H127" stroke-dasharray="6 1.500 1.500 1.500"/><rect x="109.500" y="686" width="11" height="11" stroke-width="1.800"/><path d="M115 678 v7"/>
<path d="M142 698.500 H168" stroke-dasharray="6 1.500 1.500 1.500"/><rect x="149" y="675.500" width="11" height="11" stroke-width="1.800"/><path d="M155 689 v7"/>
<path d="M184.500 673 V700 M210.500 673 V700" stroke-dasharray="6 1.500 1.500 1.500"/><rect x="192" y="681" width="11" height="11" stroke-width="1.800"/><path d="M186 687 h5 M204 687 h5"/>
<path d="M16 709.500 H42" stroke-dasharray="6 1.500 1.500 1.500"/><rect x="23.500" y="718" width="11" height="8" stroke-width="1.800"/>
<path d="M58.500 721 V709.500 H84 V721" stroke-dasharray="6 1.500 1.500 1.500"/><rect x="65.500" y="718" width="11" height="8" stroke-width="1.800"/>
<path d="M100.500 721 V709.500 H126.500 V721" stroke="#a0a0a0" stroke-dasharray="1.500 1.500"/><rect x="108" y="718" width="11" height="8" stroke-width="1.800"/><path d="M113.500 712 v5 M111.500 714 l2 -2.500 l2 2.500" stroke-width="1"/>
</g>
<g fill="#808080"><path d="M19.500 687 l3.500 -2.600 v5.200 z M82 687 l-3.500 -2.600 v5.200 z M115 677 l-2.600 3.500 h5.200 z M155 697.500 l-2.600 -3.500 h5.200 z M185.500 687 l3 -2.400 v4.800 z M209.500 687 l-3 -2.400 v4.800 z"/><path d="M29 712 l2.500 2.500 l-2.500 2.500 l-2.500 -2.500 z M71 712 l2.500 2.500 l-2.500 2.500 l-2.500 -2.500 z"/></g>
<path d="M24 690 q8 -2 17 -1 M60 690 q8 -2 17 -1 M106 693 q10 -2 22 -1 M156 692 q8 -3 14 -2 M189 693 q10 -2 18 -1" stroke="#d0d0d0" stroke-width="1.500" fill="none"/>
<path d="M133.0 708 h5 v1 h-1 v3 h1.5 v1.2 h-2.5 v3 h-1 v-3 h-2.5 v-1.2 h1.5 v-3 h-1 z" fill="#111"/>
<text x="187" y="721" font-family="Liberation Sans,sans-serif" font-size="15" font-weight="bold" fill="#0a0a0a" textLength="25">Nes</text>
<text x="146" y="722" font-family="Liberation Sans,sans-serif" font-size="6" fill="#0a0a0a" transform="rotate(-40 146 722)">x</text><text x="151" y="716" font-family="Liberation Sans,sans-serif" font-size="6" font-style="italic" fill="#0a0a0a" transform="rotate(-15 151 716)">aa</text><text x="160" y="714" font-family="Liberation Sans,sans-serif" font-size="7" fill="#0a0a0a" transform="rotate(20 160 714)">*</text><text x="166" y="718" font-family="Liberation Sans,sans-serif" font-size="7" font-weight="bold" fill="#0a0a0a" transform="rotate(55 166 718)">c</text>
</svg>
<svg style="left:0;top:721px" width="272" height="26"><filter id="nz" x="0" y="0" width="100%" height="100%" color-interpolation-filters="sRGB"><feTurbulence type="fractalNoise" baseFrequency="0.45" numOctaves="2" seed="4"/><feColorMatrix type="matrix" values="0.2 0 0 0 0.73  0.2 0 0 0 0.73  0.2 0 0 0 0.73  0 0 0 0 1"/></filter><rect width="272" height="26" filter="url(#nz)"/></svg>
<div style="left:128px;top:721px;width:144px;height:1px;background:#a4a4a4;"></div>
<div style="left:0px;top:746px;width:272px;height:1px;background:#a0a0a0;"></div>
<div style="left:0px;top:721px;width:63px;height:25px;background:#f0f0f0;border-radius:0 0 5px 0"></div>
<div style="left:63px;top:721px;width:65px;height:25px;background:#f6f6f6;border:1px solid #9c9c9c;border-top:1px solid #a4a4a4;border-radius:2px 2px 5px 5px"></div>
<div class="t" style="left:8.5px;top:727px;font-size:12px;line-height:12px;color:#111;font-size:12.5px;transform:scaleX(0.92);transform-origin:0 0;">Assistant</div>
<div class="t" style="left:71px;top:728px;font-size:12px;line-height:12px;color:#111;font-size:12.5px;transform:scaleX(0.98);transform-origin:0 0;">Toolpaths</div>
<div style="left:276px;top:43px;width:814px;height:1px;background:#a6a6a6;"></div>
<div style="left:276px;top:44px;width:1px;height:703px;background:#fbfbfb;"></div>
<div class="t" style="left:284.5px;top:51px;font-size:14px;line-height:14px;color:#0a0a0a;font-weight:bold;letter-spacing:-1.1px;transform:scaleY(1.2);transform-origin:0 84.65%;-webkit-text-stroke:0.5px #0a0a0a;">3D</div>
<svg style="left:276px;top:44px" width="400" height="30" viewBox="276 44 400 30">
<defs><radialGradient id="lens" cx="0.4" cy="0.35" r="0.7"><stop offset="0" stop-color="#eef8fd"/><stop offset="1" stop-color="#c4e4f4"/></radialGradient></defs>
<path d="M319.0 61 L321.7 63" stroke="#c8a468" stroke-width="4" stroke-linecap="round"/>
<circle cx="314.5" cy="57" r="5.800" fill="url(#lens)" stroke="#6e7e8e" stroke-width="1.400"/><path d="M310.500 57 h8 M314.500 53 v8" stroke="#2a5870" stroke-width="1.900"/>
<path d="M342.5 61 L345.2 63" stroke="#c8a468" stroke-width="4" stroke-linecap="round"/>
<circle cx="338" cy="57" r="5.800" fill="url(#lens)" stroke="#6e7e8e" stroke-width="1.400"/><path d="M334 57 h8" stroke="#2a5870" stroke-width="1.900"/>
<path d="M365.5 61 L368.2 63" stroke="#c8a468" stroke-width="4" stroke-linecap="round"/>
<circle cx="361" cy="57" r="5.800" fill="url(#lens)" stroke="#6e7e8e" stroke-width="1.400"/><path d="M358 55.500 Q362 52.500 364 56 Q365 60 360 60.500" fill="none" stroke="#a8a820" stroke-width="1.700"/><path d="M356.500 53.500 l0.500 4.500 l4 -2 z" fill="#a8a820"/>
<path d="M377.5 50 V68" stroke="#b4b4b4" stroke-width="1"/><path d="M378.5 50 V68" stroke="#fcfcfc" stroke-width="1"/>
<path d="M396.5 61 L399.2 63" stroke="#c8a468" stroke-width="4" stroke-linecap="round"/>
<circle cx="392" cy="57" r="5.800" fill="url(#lens)" stroke="#6e7e8e" stroke-width="1.400"/><text x="387.500" y="59.500" font-family="Liberation Sans,sans-serif" font-size="6.500" font-weight="bold" fill="#3c6c94" textLength="9">1:1</text>
<path d="M419.5 61 L422.2 63" stroke="#c8a468" stroke-width="4" stroke-linecap="round"/>
<circle cx="415" cy="57" r="5.800" fill="url(#lens)" stroke="#6e7e8e" stroke-width="1.400"/><rect x="411.500" y="54" width="7" height="5.500" fill="#d8e8f4" stroke="#2c5c8c" stroke-width="1.200"/>
<path d="M431 57.500 Q431 51 437.500 51 Q443 51.500 443.500 56 L446.500 63 L446 65 L442 64.500 L440 63 Q431 64.500 431 57.500 Z" fill="#a0a0a0"/>
<path d="M454.5 50 V68" stroke="#b4b4b4" stroke-width="1"/><path d="M455.5 50 V68" stroke="#fcfcfc" stroke-width="1"/>
<rect x="459.500" y="48.500" width="22.500" height="20.500" fill="#f7f7f7"/><rect x="482.500" y="48.500" width="22" height="20.500" fill="#f7f7f7"/><path d="M459.500 69 V48.500 H504.500 M482.500 48.500 V69" fill="none" stroke="#b8b8b8" stroke-width="1"/>
<path d="M466 54 h2.600 M469.600 54 h3 M466 56.4 h2.600 M469.600 56.4 h3 M466 58.8 h2.600 M469.600 58.8 h3 M466 61.2 h2.600 M469.600 61.2 h3 M466 63.6 h2.600 M469.600 63.6 h3 M466 66 h2.600 M469.600 66 h3" stroke="#222" stroke-width="1.100"/><path d="M479 57 h-4.500 v-3 l-5.500 5 l5.500 5 v-3 h4.500 z" fill="#777" stroke="#111" stroke-width="1"/>
<path d="M497 54 h2.600 M500.600 54 h3 M497 56.4 h2.600 M500.600 56.4 h3 M497 58.8 h2.600 M500.600 58.8 h3 M497 61.2 h2.600 M500.600 61.2 h3 M497 63.6 h2.600 M500.600 63.6 h3 M497 66 h2.600 M500.600 66 h3" stroke="#222" stroke-width="1.100"/><path d="M487 57 h4.500 v-3 l5.500 5 l-5.500 5 v-3 h-4.500 z" fill="#777" stroke="#111" stroke-width="1"/>
<path d="M521 60 L524 63" stroke="#c8a070" stroke-width="3" stroke-linecap="round"/><circle cx="518.500" cy="57.500" r="4.800" fill="#c8dcf0" stroke="#98b4d4" stroke-width="1.200"/><path d="M508 58 L515.500 52.500 V56 H520 V60.500 H515.500 V63.500 Z" fill="#6878c4" opacity="0.9"/>
<path d="M532.5 50 V68" stroke="#b4b4b4" stroke-width="1"/><path d="M533.5 50 V68" stroke="#fcfcfc" stroke-width="1"/>
<path d="M544 58.700 H617" stroke="#868686" stroke-width="1.800"/><path d="M544 60.100 H617" stroke="#fdfdfd" stroke-width="1"/>
<path d="M619.500 50.500 H627 V66 L624.500 69 H619.500 Z" fill="#f2f2f2" stroke="none"/><path d="M627 50.500 V66 L624.500 69" fill="none" stroke="#6c6c6c" stroke-width="1.300"/><path d="M619.500 69 V50.500 H627" fill="none" stroke="#fdfdfd" stroke-width="1"/>
</svg>
<div style="left:277px;top:74px;width:794px;height:1px;background:#828282;"></div>
<div style="left:277px;top:94px;width:794px;height:1px;background:#828282;"></div>
<div style="left:277px;top:74px;width:1px;height:611px;background:#828282;"></div>
<div style="left:297px;top:74px;width:1px;height:611px;background:#828282;"></div>
<div style="left:1070px;top:75px;width:1px;height:19px;background:#c8c8c8;"></div>
<svg style="left:278px;top:75px" width="793" height="610" viewBox="278 75 793 610">
<path d="M281 84.500 h12 M287 79 v11" stroke="#b8b8b8" stroke-width="1" stroke-dasharray="1.500 1"/><path d="M285 82 v5 M289 82 v5 M284 83 h6 M284 86.500 h6" stroke="#c8c8c8" stroke-width="0.700"/>
<path d="M304.5 92 V94 M309.5 92 V94 M315.5 92 V94 M320.5 90 V94 M326.5 92 V94 M331.5 92 V94 M337.5 92 V94 M342.5 92 V94 M348.5 88 V94 M354.5 92 V94 M359.5 92 V94 M365.5 92 V94 M370.5 92 V94 M376.5 90 V94 M381.5 92 V94 M387.5 92 V94 M392.5 92 V94 M398.5 92 V94 M404.5 88 V94 M409.5 92 V94 M415.5 92 V94 M420.5 92 V94 M426.5 92 V94 M431.5 90 V94 M437.5 92 V94 M442.5 92 V94 M448.5 92 V94 M453.5 92 V94 M459.5 88 V94 M465.5 92 V94 M470.5 92 V94 M476.5 92 V94 M481.5 92 V94 M487.5 90 V94 M492.5 92 V94 M498.5 92 V94 M503.5 92 V94 M509.5 92 V94 M514.5 88 V94 M520.5 92 V94 M526.5 92 V94 M531.5 92 V94 M537.5 92 V94 M542.5 90 V94 M548.5 92 V94 M553.5 92 V94 M559.5 92 V94 M564.5 92 V94 M570.5 88 V94 M576.5 92 V94 M581.5 92 V94 M587.5 92 V94 M592.5 92 V94 M598.5 90 V94 M603.5 92 V94 M609.5 92 V94 M614.5 92 V94 M620.5 92 V94 M626.5 88 V94 M631.5 92 V94 M637.5 92 V94 M642.5 92 V94 M648.5 92 V94 M653.5 90 V94 M659.5 92 V94 M664.5 92 V94 M670.5 92 V94 M675.5 92 V94 M681.5 88 V94 M687.5 92 V94 M692.5 92 V94 M698.5 92 V94 M703.5 92 V94 M709.5 90 V94 M714.5 92 V94 M720.5 92 V94 M725.5 92 V94 M731.5 92 V94 M736.5 88 V94 M742.5 92 V94 M748.5 92 V94 M753.5 92 V94 M759.5 92 V94 M764.5 90 V94 M770.5 92 V94 M775.5 92 V94 M781.5 92 V94 M786.5 92 V94 M792.5 88 V94 M798.5 92 V94 M803.5 92 V94 M809.5 92 V94 M814.5 92 V94 M820.5 90 V94 M825.5 92 V94 M831.5 92 V94 M836.5 92 V94 M842.5 92 V94 M848.5 88 V94 M853.5 92 V94 M859.5 92 V94 M864.5 92 V94 M870.5 92 V94 M875.5 90 V94 M881.5 92 V94 M886.5 92 V94 M892.5 92 V94 M897.5 92 V94 M903.5 88 V94 M909.5 92 V94 M914.5 92 V94 M920.5 92 V94 M925.5 92 V94 M931.5 90 V94 M936.5 92 V94 M942.5 92 V94 M947.5 92 V94 M953.5 92 V94 M958.5 88 V94 M964.5 92 V94 M970.5 92 V94 M975.5 92 V94 M981.5 92 V94 M986.5 90 V94 M992.5 92 V94 M997.5 92 V94 M1003.5 92 V94 M1008.5 92 V94 M1014.5 88 V94 M1020.5 92 V94 M1025.5 92 V94 M1031.5 92 V94 M1036.5 92 V94 M1042.5 90 V94 M1047.5 92 V94 M1053.5 92 V94 M1058.5 92 V94" stroke="#111" stroke-width="1"/>
<path d="M295 100.5 H297 M295 106.5 H297 M291 112.5 H297 M295 117.5 H297 M295 123.5 H297 M295 128.5 H297 M295 134.5 H297 M293 139.5 H297 M295 145.5 H297 M295 150.5 H297 M295 156.5 H297 M295 161.5 H297 M291 167.5 H297 M295 173.5 H297 M295 178.5 H297 M295 184.5 H297 M295 189.5 H297 M293 195.5 H297 M295 200.5 H297 M295 206.5 H297 M295 211.5 H297 M295 217.5 H297 M291 222.5 H297 M295 228.5 H297 M295 234.5 H297 M295 239.5 H297 M295 245.5 H297 M293 250.5 H297 M295 256.5 H297 M295 261.5 H297 M295 267.5 H297 M295 272.5 H297 M291 278.5 H297 M295 284.5 H297 M295 289.5 H297 M295 295.5 H297 M295 300.5 H297 M293 306.5 H297 M295 311.5 H297 M295 317.5 H297 M295 322.5 H297 M295 328.5 H297 M291 334.5 H297 M295 339.5 H297 M295 345.5 H297 M295 350.5 H297 M295 356.5 H297 M293 361.5 H297 M295 367.5 H297 M295 372.5 H297 M295 378.5 H297 M295 383.5 H297 M291 389.5 H297 M295 395.5 H297 M295 400.5 H297 M295 406.5 H297 M295 411.5 H297 M293 417.5 H297 M295 422.5 H297 M295 428.5 H297 M295 433.5 H297 M295 439.5 H297 M291 444.5 H297 M295 450.5 H297 M295 456.5 H297 M295 461.5 H297 M295 467.5 H297 M293 472.5 H297 M295 478.5 H297 M295 483.5 H297 M295 489.5 H297 M295 494.5 H297 M291 500.5 H297 M295 506.5 H297 M295 511.5 H297 M295 517.5 H297 M295 522.5 H297 M293 528.5 H297 M295 533.5 H297 M295 539.5 H297 M295 544.5 H297 M295 550.5 H297 M291 556.5 H297 M295 561.5 H297 M295 567.5 H297 M295 572.5 H297 M295 578.5 H297 M293 583.5 H297 M295 589.5 H297 M295 594.5 H297 M295 600.5 H297 M295 605.5 H297 M291 611.5 H297 M295 617.5 H297 M295 622.5 H297 M295 628.5 H297 M295 633.5 H297 M293 639.5 H297 M295 644.5 H297 M295 650.5 H297 M295 655.5 H297 M295 661.5 H297 M291 666.5 H297 M295 672.5 H297 M295 678.5 H297 M295 683.5 H297" stroke="#111" stroke-width="1"/>
<path d="M1063.500 76 V94 M279 594.500 H295" stroke="#111" stroke-width="1"/>
<text x="347.7" y="86" text-anchor="middle" font-family="Liberation Sans,sans-serif" font-size="11" fill="#0a0a0a">-1200</text>
<text x="403.7" y="86" text-anchor="middle" font-family="Liberation Sans,sans-serif" font-size="11" fill="#0a0a0a">-1000</text>
<text x="458.7" y="86" text-anchor="middle" font-family="Liberation Sans,sans-serif" font-size="11" fill="#0a0a0a">-800</text>
<text x="513.7" y="86" text-anchor="middle" font-family="Liberation Sans,sans-serif" font-size="11" fill="#0a0a0a">-600</text>
<text x="569.7" y="86" text-anchor="middle" font-family="Liberation Sans,sans-serif" font-size="11" fill="#0a0a0a">-400</text>
<text x="625.7" y="86" text-anchor="middle" font-family="Liberation Sans,sans-serif" font-size="11" fill="#0a0a0a">-200</text>
<text x="680.7" y="86" text-anchor="middle" font-family="Liberation Sans,sans-serif" font-size="11" fill="#0a0a0a">0</text>
<text x="735.7" y="86" text-anchor="middle" font-family="Liberation Sans,sans-serif" font-size="11" fill="#0a0a0a">200</text>
<text x="791.7" y="86" text-anchor="middle" font-family="Liberation Sans,sans-serif" font-size="11" fill="#0a0a0a">400</text>
<text x="847.7" y="86" text-anchor="middle" font-family="Liberation Sans,sans-serif" font-size="11" fill="#0a0a0a">600</text>
<text x="902.7" y="86" text-anchor="middle" font-family="Liberation Sans,sans-serif" font-size="11" fill="#0a0a0a">800</text>
<text x="957.7" y="86" text-anchor="middle" font-family="Liberation Sans,sans-serif" font-size="11" fill="#0a0a0a">1000</text>
<text x="0" y="0" transform="translate(288.700 666.5) rotate(-90)" text-anchor="middle" font-family="Liberation Sans,sans-serif" font-size="11" fill="#0a0a0a">-1000</text>
<text x="0" y="0" transform="translate(288.700 611.5) rotate(-90)" text-anchor="middle" font-family="Liberation Sans,sans-serif" font-size="11" fill="#0a0a0a">-800</text>
<text x="0" y="0" transform="translate(288.700 556.5) rotate(-90)" text-anchor="middle" font-family="Liberation Sans,sans-serif" font-size="11" fill="#0a0a0a">-600</text>
<text x="0" y="0" transform="translate(288.700 500.5) rotate(-90)" text-anchor="middle" font-family="Liberation Sans,sans-serif" font-size="11" fill="#0a0a0a">-400</text>
<text x="0" y="0" transform="translate(288.700 444.5) rotate(-90)" text-anchor="middle" font-family="Liberation Sans,sans-serif" font-size="11" fill="#0a0a0a">-200</text>
<text x="0" y="0" transform="translate(288.700 389.5) rotate(-90)" text-anchor="middle" font-family="Liberation Sans,sans-serif" font-size="11" fill="#0a0a0a">0</text>
<text x="0" y="0" transform="translate(288.700 334.5) rotate(-90)" text-anchor="middle" font-family="Liberation Sans,sans-serif" font-size="11" fill="#0a0a0a">200</text>
<text x="0" y="0" transform="translate(288.700 278.5) rotate(-90)" text-anchor="middle" font-family="Liberation Sans,sans-serif" font-size="11" fill="#0a0a0a">400</text>
<text x="0" y="0" transform="translate(288.700 222.5) rotate(-90)" text-anchor="middle" font-family="Liberation Sans,sans-serif" font-size="11" fill="#0a0a0a">600</text>
<text x="0" y="0" transform="translate(288.700 167.5) rotate(-90)" text-anchor="middle" font-family="Liberation Sans,sans-serif" font-size="11" fill="#0a0a0a">800</text>
<text x="0" y="0" transform="translate(288.700 112.5) rotate(-90)" text-anchor="middle" font-family="Liberation Sans,sans-serif" font-size="11" fill="#0a0a0a">1000</text>
<text x="1027" y="85.500" font-family="DejaVu Sans,sans-serif" font-size="8" fill="#0a0a0a" textLength="42" lengthAdjust="spacingAndGlyphs">millimetres</text>
</svg>
<div style="left:1071px;top:75px;width:17px;height:20px;background:#f2f2f2;border:1px solid #fff;border-right:1px solid #777;border-bottom:2px solid #777"></div>
<svg style="left:1071px;top:75px" width="17" height="20" viewBox="0 0 17 20"><path d="M4 7 h3.500 M9.500 7 h3.500" stroke="#111" stroke-width="1.300"/><path d="M4 10 h9 l-4.500 4.200 z" fill="#111"/></svg>
<div style="left:298px;top:685px;width:774px;height:1px;background:#fff;"></div>
<div style="left:1071px;top:95px;width:1px;height:591px;background:#fff;"></div>
<div style="left:556px;top:124px;width:253px;height:530px;background:#ffff80;border:1px solid #0a0a0a"></div>
<svg style="left:608px;top:412px" width="64" height="188" viewBox="608 412 64 188">
<defs><filter id="ob"><feGaussianBlur stdDeviation="0.35"/></filter><g id="orn" fill="none" stroke-linecap="round" stroke-linejoin="round">
<path d="M631 447.500 C624 449.500 619.500 444 621.500 436.500 C623.500 427 632 421 641 421.500 C654 422 662 430 661.500 441 C661 452 654 462 646 470 C640 476 632 482 623.500 490"/>
<path d="M627 465 C622 468 618 464 620 459.500 C622 454.500 630 454.500 634 459.500 C638 465 634 474 628 482"/>
<path d="M653 451 C646 452 641 458 639 465 C638 469 636 473 633 477"/>
<path d="M636 454 C639 457 640 461 639 465"/>
<path d="M618.500 480 C622.500 484 622.500 492 621.500 500 C620.500 510 624 518 632 523 C642 528 652 534 658 544 C663 554 662 568 656 578 C650 587 638 590.500 629 586.500 C620 582.500 616 573 619 566 C622 559.500 630 558.500 632.500 563"/>
<path d="M623.500 491 C630 484 642 481.500 652 487 C660 492 663 503 659 512 C656 518 648 521 643.500 517"/>
<path d="M641 505 C637 508 632 505 633 500 C634 495 641 493 646 497"/>
<path d="M648 507 C652 510 657 507 657 502"/>
<path d="M640 530.500 C632 527.500 622 530.500 619.500 538.500 C617 546.500 620.500 554 628 555 C634 556 638 552 637 548.500"/>
<path d="M633 541 C629 544 625 541 627 537"/>
<path d="M647 549 C651 552 656 548 655 543 C654 540 650 538 647 539"/>
<path d="M651 556 C653.500 564 654 572 650 580"/>
<path d="M638.500 573 C640 578 634 582 628 579"/>
</g></defs>
<g filter="url(#ob)">
<path d="M655 461 L657.500 473 L650 478.500 Z M649 478.500 L661.500 473.500 L656 481 L646 483 Z M656.500 512 L661 537 L652 530 L654 518 Z M617.500 523.500 L631 521.500 L627 528 Z M640 562.500 L648 565.500 L645.500 570.500 Z M646.500 560 L651 557 L652.500 572 Z" fill="#a8a8a8" stroke="#8a8a8a" stroke-width="0.600"/>
<use href="#orn" stroke="#6a6a6a" stroke-width="5.800"/>
<use href="#orn" stroke="#b4b4b4" stroke-width="4.800"/>
<use href="#orn" stroke="#f2f2f2" stroke-width="2.600" transform="translate(-0.4 -0.4)"/>
<circle cx="630.5" cy="448" r="2.700" fill="#8a8a8a"/><circle cx="630.2" cy="447.7" r="1.800" fill="#f0f0f0"/>
<circle cx="625" cy="464" r="2.700" fill="#8a8a8a"/><circle cx="624.7" cy="463.7" r="1.800" fill="#f0f0f0"/>
<circle cx="642" cy="516" r="2.700" fill="#8a8a8a"/><circle cx="641.7" cy="515.7" r="1.800" fill="#f0f0f0"/>
<circle cx="639" cy="504.5" r="2.700" fill="#8a8a8a"/><circle cx="638.7" cy="504.2" r="1.800" fill="#f0f0f0"/>
<circle cx="649.5" cy="506" r="2.700" fill="#8a8a8a"/><circle cx="649.2" cy="505.7" r="1.800" fill="#f0f0f0"/>
<circle cx="636" cy="547.5" r="2.700" fill="#8a8a8a"/><circle cx="635.7" cy="547.2" r="1.800" fill="#f0f0f0"/>
<circle cx="631" cy="540" r="2.700" fill="#8a8a8a"/><circle cx="630.7" cy="539.7" r="1.800" fill="#f0f0f0"/>
<circle cx="645.8" cy="548" r="2.700" fill="#8a8a8a"/><circle cx="645.5" cy="547.7" r="1.800" fill="#f0f0f0"/>
<circle cx="631.5" cy="564.5" r="2.700" fill="#8a8a8a"/><circle cx="631.2" cy="564.2" r="1.800" fill="#f0f0f0"/>
<circle cx="637.8" cy="572" r="2.700" fill="#8a8a8a"/><circle cx="637.5" cy="571.7" r="1.800" fill="#f0f0f0"/>
<path d="M641.500 448 L641 458" stroke="#6a6a6a" stroke-width="2.400"/><path d="M641.500 448 L641 458" stroke="#c8c8c8" stroke-width="0.900"/>
<ellipse cx="646.7" cy="441.3" rx="3.400" ry="1.700" transform="rotate(0 646.7 441.3)" fill="#6c6c76"/><ellipse cx="646.0" cy="443.8" rx="3.400" ry="1.700" transform="rotate(30 646.0 443.8)" fill="#6c6c76"/><ellipse cx="644.2" cy="445.6" rx="3.400" ry="1.700" transform="rotate(60 644.2 445.6)" fill="#6c6c76"/><ellipse cx="641.7" cy="446.3" rx="3.400" ry="1.700" transform="rotate(90 641.7 446.3)" fill="#6c6c76"/><ellipse cx="639.2" cy="445.6" rx="3.400" ry="1.700" transform="rotate(120 639.2 445.6)" fill="#6c6c76"/><ellipse cx="637.4" cy="443.8" rx="3.400" ry="1.700" transform="rotate(150 637.4 443.8)" fill="#6c6c76"/><ellipse cx="636.7" cy="441.3" rx="3.400" ry="1.700" transform="rotate(180 636.7 441.3)" fill="#6c6c76"/><ellipse cx="637.4" cy="438.8" rx="3.400" ry="1.700" transform="rotate(210 637.4 438.8)" fill="#6c6c76"/><ellipse cx="639.2" cy="437.0" rx="3.400" ry="1.700" transform="rotate(240 639.2 437.0)" fill="#6c6c76"/><ellipse cx="641.7" cy="436.3" rx="3.400" ry="1.700" transform="rotate(270 641.7 436.3)" fill="#6c6c76"/><ellipse cx="644.2" cy="437.0" rx="3.400" ry="1.700" transform="rotate(300 644.2 437.0)" fill="#6c6c76"/><ellipse cx="646.0" cy="438.8" rx="3.400" ry="1.700" transform="rotate(330 646.0 438.8)" fill="#6c6c76"/>
<circle cx="641.700" cy="441.300" r="4.500" fill="#5c5c68"/><circle cx="641.700" cy="441.300" r="1.400" fill="#e8e8e8"/>
</g></svg>
<div style="left:1072px;top:95px;width:16px;height:590px;background:#f0f0f0;"></div>
<div style="left:1072px;top:112px;width:16px;height:556px;background:#cdcdcd;"></div>
<svg style="left:1072px;top:95px" width="16" height="590" viewBox="0 0 16 590" fill="none" stroke="#505050" stroke-width="2.300"><path d="M4 11.500 L8 7.500 L12 11.500"/><path d="M4 579.500 L8 583.500 L12 579.500"/></svg>
<div style="left:298px;top:686px;width:773px;height:16px;background:#f0f0f0;"></div>
<div style="left:315px;top:686px;width:739px;height:15px;background:#cdcdcd;"></div>
<svg style="left:298px;top:686px" width="773" height="16" viewBox="0 0 773 16" fill="none" stroke="#505050" stroke-width="2.300"><path d="M10.500 3.500 L6.500 7.500 L10.500 11.500"/><path d="M763 3.500 L767 7.500 L763 11.500"/></svg>
<div style="left:277px;top:685px;width:21px;height:17px;background:#f2f2f2;border:1px solid #fff;border-right:1px solid #777;border-bottom:2px solid #777;border-left:1px solid #999"></div>
<svg style="left:277px;top:685px" width="21" height="17" viewBox="0 0 21 17"><path d="M7.500 3 v3 M7.500 9 v3" stroke="#111" stroke-width="1.300"/><path d="M10 3 v9 l4.200 -4.500 z" fill="#111"/></svg>
<div style="left:276px;top:703px;width:814px;height:1px;background:#fdfdfd;"></div>
<div style="left:277px;top:747px;width:812px;height:1px;background:#fcfcfc;"></div>
<div style="left:277px;top:706px;width:811px;height:1px;background:#9a9a9a;"></div>
<div style="left:277px;top:706px;width:1px;height:41px;background:#9a9a9a;"></div>
<div style="left:1088px;top:44px;width:1px;height:703px;background:#fafafa;"></div>
<div style="left:298px;top:723px;width:25px;height:20px;background:#000;box-shadow:1px 1px 0 #666"></div>
<div style="left:283px;top:711px;width:25px;height:20px;background:#fff;border:1px solid #111;box-shadow:1px 1px 0 #888"></div>
<svg style="left:310px;top:711px" width="14" height="11" viewBox="0 0 14 11" fill="none" stroke="#111" stroke-width="1.100"><rect x="1.500" y="1" width="8" height="5" rx="2.500"/><rect x="4.500" y="4" width="8" height="5" rx="2.500"/></svg>
<div class="sw" style="left:333px;background:#ffffff"></div>
<div class="sw" style="left:368px;background:#000000"></div>
<div class="sw" style="left:403px;background:#00ffff"></div>
<div class="sw" style="left:438px;background:#3848e0"></div>
<div class="sw" style="left:473px;background:#5cbc54"></div>
<div class="sw" style="left:508px;background:#dc1424"></div>
<div class="sw" style="left:543px;background:#a030e0"></div>
<div class="sw" style="left:578px;background:#ffff80"></div>
<div class="sw" style="left:613px;background:#b0a038"></div>
<div class="sw" style="left:648px;background:#fcc41c"></div>
<div class="sw" style="left:683px;background:#0a0a0a"></div>
<div class="sw" style="left:718px;background:#0a0a0a"></div>
<div class="sw" style="left:753px;background:#0a0a0a"></div>
<div class="sw" style="left:788px;background:#0a0a0a"></div>
<div class="sw" style="left:823px;background:#0a0a0a"></div>
<div class="sw" style="left:858px;background:#0a0a0a"></div>
<div class="sw" style="left:893px;background:#0a0a0a"></div>
<div class="sw" style="left:928px;background:#0a0a0a"></div>
<div class="sw" style="left:963px;background:#0a0a0a"></div>
<div class="sw" style="left:998px;background:#0a0a0a"></div>
<div class="sw" style="left:1033px;background:#0a0a0a"></div>
<svg style="left:1072px;top:708px" width="16" height="38" viewBox="0 0 16 38" fill="none" stroke="#505050" stroke-width="2.300"><path d="M4 10 L8 6 L12 10"/><path d="M4 28.500 L8 32.500 L12 28.500"/></svg>
<div style="left:1093px;top:44px;width:1px;height:703px;background:#a6a6a6;"></div>
<div style="left:1094px;top:44px;width:1px;height:703px;background:#fbfbfb;"></div>
<div style="left:1365px;top:43px;width:1px;height:704px;background:#b8b8b8;"></div>
<div class="rh" style="top:45px"></div>
<div class="t" style="left:1106px;top:47px;font-size:12.4px;line-height:12.4px;color:#fff;font-weight:bold;">Vectors</div>
<div class="cb2" style="left:1327px;top:46px"><i></i></div>
<div class="dd" style="top:61px"></div>
<div class="t" style="left:1105.5px;top:64px;font-size:12px;line-height:12px;color:#0a0a0a;letter-spacing:0.1px;">Default Sheet</div>
<div class="ddb" style="left:1324px;top:63px"><i></i></div>
<div class="rh" style="top:172px"></div>
<div class="t" style="left:1106px;top:174px;font-size:12.4px;line-height:12.4px;color:#fff;font-weight:bold;">Bitmaps</div>
<div class="cb2" style="left:1327px;top:173px"><i></i></div>
<div class="rh" style="top:253px"></div>
<div class="t" style="left:1106px;top:255px;font-size:12.4px;line-height:12.4px;color:#fff;font-weight:bold;">Reliefs</div>
<div class="cb2" style="left:1327px;top:254px"><i></i></div>
<div class="dd" style="top:269px"></div>
<div class="t" style="left:1105.5px;top:272px;font-size:12px;line-height:12px;color:#0a0a0a;letter-spacing:0.1px;">Front Relief</div>
<div class="ddb" style="left:1324px;top:271px"><i></i></div>
<div class="lr" style="top:112px"></div>
<div class="t" style="left:1128px;top:120px;font-size:12px;line-height:12px;color:#0a0a0a;">Default Layer</div>
<div class="lr" style="top:213px;height:24px"></div>
<div class="t" style="left:1128px;top:220px;font-size:12px;line-height:12px;color:#0a0a0a;">Bitmap Layer 1</div>
<div class="lr" style="top:320px;height:26px"></div>
<div class="t" style="left:1149.5px;top:328px;font-size:12px;line-height:12px;color:#0a0a0a;">Relief Layer 1</div>
<div style="left:1106px;top:116px;width:17px;height:18px;background:#ececec;border:1px solid #fff;border-right-color:#888;border-bottom-color:#888"></div>
<div style="left:1108px;top:119px;width:13px;height:13px;border-radius:50%;background:#000"></div>
<svg style="left:1095px;top:44px" width="271" height="400" viewBox="1095 44 271 400">
<defs>
<linearGradient id="gdoc2" x1="0" y1="0" x2="1" y2="1"><stop offset="0" stop-color="#6c86b4"/><stop offset="1" stop-color="#ccd8ea"/></linearGradient>
<linearGradient id="ggray" x1="0" y1="0" x2="1" y2="1"><stop offset="0" stop-color="#8c8c8c"/><stop offset="1" stop-color="#f4f4f4"/></linearGradient>
<radialGradient id="gbulb" cx="0.4" cy="0.35" r="0.7"><stop offset="0" stop-color="#fff8b0"/><stop offset="1" stop-color="#f0b820"/></radialGradient>
<filter id="blr"><feGaussianBlur stdDeviation="0.45"/></filter>
</defs>
<g filter="url(#blr)">
<path d="M1104 91 h6.500 l4.500 5 v10 h-11 z" fill="url(#gdoc2)"/><path d="M1110.5 91 l4.500 5 h-4.500 z" fill="#f4f6fa"/><path d="M1112 106 l5.500 -2.500 l-1.500 3 z" fill="#a8a8a8"/>
<path d="M1140 94.5 q0 -2 2 -2 l4 0 l1.500 1.500 l4 0 q1.500 0 1.500 2 l0 2 l2.500 0 l-3.500 6 l-10.500 0.500 q-1.500 0 -1.500 -2 z" fill="#f8ec30"/><path d="M1141 103.5 l3 -5 l11.500 -0.500 l-3.500 6 z" fill="#e0cc14"/>
<path d="M1177 92 h12 v12 h-10 l-2 -2 z" fill="#2858c0"/><rect x="1179.5" y="92.5" width="7" height="5" fill="#e0e4ec"/><rect x="1180" y="99.5" width="6.500" height="4.500" fill="#c8ccd4"/><rect x="1181" y="100.5" width="2" height="3" fill="#2858c0"/><path d="M1189 101 l3 -1 l-1 3 l-2 1 z" fill="#b4b4b4"/>
<path d="M1213.5 91 h8 l1 3 l2 1 l1 6 l2 2 v3 h-11 l-1 -3 l-2 -1 z" fill="#b89868"/><path d="M1214.5 93 l1 10 M1217.5 92 l2 12 M1220.5 94 l2 10" stroke="#9c7c4c" stroke-width="0.800"/>
<path d="M1252 91 h8 l3 3 v12 h-11 z" fill="#8ca0b8"/><path d="M1260 91 l3 3 h-3 z" fill="#dce4ec"/><circle cx="1258" cy="98" r="3.800" fill="url(#gbulb)"/><rect x="1256.5" y="101.5" width="3" height="3" fill="#504020"/>
<path d="M1290.0 96 h10 l-1.300 9 h-7.400 z" fill="#4878e0"/><ellipse cx="1295.0" cy="96" rx="5.300" ry="2" fill="#a4c0f4" stroke="#3868d0" stroke-width="0.800"/><path d="M1292.5 99 v5" stroke="#88a8f0" stroke-width="1.200"/>
<rect x="1323.500" y="90.5" width="17" height="16" fill="#f4f0e0" stroke="#e8e0c0" stroke-width="1"/><path d="M1323.500 106.5 V90.5 H1340.500" fill="none" stroke="#d8a848" stroke-width="1"/>
<circle cx="1335" cy="95.5" r="4.5" fill="url(#gbulb)"/><path d="M1333 99.0 h4 l-0.500 2.500 h-3 z" fill="#e8a820"/><rect x="1333.4" y="101.3" width="3.200" height="3" fill="#3c2c14"/>
<circle cx="1329" cy="97.5" r="4.5" fill="url(#gbulb)"/><path d="M1327 101.0 h4 l-0.500 2.500 h-3 z" fill="#e8a820"/><rect x="1327.4" y="103.3" width="3.200" height="3" fill="#3c2c14"/>
<path d="M1104 192 h6.500 l4.500 5 v10 h-11 z" fill="url(#gdoc2)"/><path d="M1110.5 192 l4.500 5 h-4.500 z" fill="#f4f6fa"/><path d="M1112 207 l5.500 -2.500 l-1.500 3 z" fill="#a8a8a8"/>
<path d="M1134.5 195.5 q0 -2 2 -2 l4 0 l1.500 1.500 l4 0 q1.500 0 1.500 2 l0 2 l2.500 0 l-3.500 6 l-10.500 0.500 q-1.500 0 -1.500 -2 z" fill="#f8ec30"/><path d="M1135.5 204.5 l3 -5 l11.500 -0.500 l-3.500 6 z" fill="#e0cc14"/>
<path d="M1166 193 h12 v12 h-10 l-2 -2 z" fill="#2858c0"/><rect x="1168.5" y="193.5" width="7" height="5" fill="#e0e4ec"/><rect x="1169" y="200.5" width="6.500" height="4.500" fill="#c8ccd4"/><rect x="1170" y="201.5" width="2" height="3" fill="#2858c0"/><path d="M1178 202 l3 -1 l-1 3 l-2 1 z" fill="#b4b4b4"/>
<path d="M1198.5 192 h8 l1 3 l2 1 l1 6 l2 2 v3 h-11 l-1 -3 l-2 -1 z" fill="#b89868"/><path d="M1199.5 194 l1 10 M1202.5 193 l2 12 M1205.5 195 l2 10" stroke="#9c7c4c" stroke-width="0.800"/>
<rect x="1230" y="192.500" width="13" height="13" fill="url(#ggray)"/><path d="M1241 204 l4 -2 l-1.500 4 z" fill="#a0a0a0"/>
<rect x="1261" y="193" width="10" height="10" fill="#5c5c2c"/><rect x="1261" y="193" width="10" height="3.5" fill="#c0c078"/><path d="M1262.0 203 L1263.0 196.5 Q1266.0 192.5 1269.0 196.5 L1270.0 203 Z" fill="#2a1a0c"/><ellipse cx="1266.0" cy="196.6" rx="1.6" ry="2.0" fill="#e0b880"/><path d="M1263.5 203 Q1266.0 198.5 1268.5 203 Z" fill="#d8b070"/>
<path d="M1266 199 h9 l2 7 h-11 z" fill="#8088d0"/>
<rect x="1261" y="193" width="9" height="10" fill="#5c5c2c"/><rect x="1261" y="193" width="9" height="3.5" fill="#c0c078"/><path d="M1261.9 203 L1262.8 196.5 Q1265.5 192.5 1268.2 196.5 L1269.1 203 Z" fill="#2a1a0c"/><ellipse cx="1265.5" cy="196.6" rx="1.44" ry="2.0" fill="#e0b880"/><path d="M1263.25 203 Q1265.5 198.5 1267.75 203 Z" fill="#d8b070"/>
<path d="M1295.0 197 h10 l-1.300 9 h-7.400 z" fill="#4878e0"/><ellipse cx="1300.0" cy="197" rx="5.300" ry="2" fill="#a4c0f4" stroke="#3868d0" stroke-width="0.800"/><path d="M1297.5 200 v5" stroke="#88a8f0" stroke-width="1.200"/>
<rect x="1323.500" y="191.5" width="17" height="16" fill="#f4f0e0" stroke="#e8e0c0" stroke-width="1"/><path d="M1323.500 207.5 V191.5 H1340.500" fill="none" stroke="#d8a848" stroke-width="1"/>
<circle cx="1335" cy="196.5" r="4.5" fill="url(#gbulb)"/><path d="M1333 200.0 h4 l-0.500 2.500 h-3 z" fill="#e8a820"/><rect x="1333.4" y="202.3" width="3.200" height="3" fill="#3c2c14"/>
<circle cx="1329" cy="198.5" r="4.5" fill="url(#gbulb)"/><path d="M1327 202.0 h4 l-0.500 2.500 h-3 z" fill="#e8a820"/><rect x="1327.4" y="204.3" width="3.200" height="3" fill="#3c2c14"/>
<path d="M1104 299 h6.500 l4.500 5 v10 h-11 z" fill="url(#gdoc2)"/><path d="M1110.5 299 l4.500 5 h-4.500 z" fill="#f4f6fa"/><path d="M1112 314 l5.500 -2.500 l-1.500 3 z" fill="#a8a8a8"/>
<path d="M1129.5 302.5 q0 -2 2 -2 l4 0 l1.500 1.500 l4 0 q1.500 0 1.500 2 l0 2 l2.500 0 l-3.500 6 l-10.500 0.500 q-1.500 0 -1.500 -2 z" fill="#f8ec30"/><path d="M1130.5 311.5 l3 -5 l11.500 -0.500 l-3.500 6 z" fill="#e0cc14"/>
<path d="M1157 300 h12 v12 h-10 l-2 -2 z" fill="#2858c0"/><rect x="1159.5" y="300.5" width="7" height="5" fill="#e0e4ec"/><rect x="1160" y="307.5" width="6.500" height="4.500" fill="#c8ccd4"/><rect x="1161" y="308.5" width="2" height="3" fill="#2858c0"/><path d="M1169 309 l3 -1 l-1 3 l-2 1 z" fill="#b4b4b4"/>
<path d="M1186 299 h8 l1 3 l2 1 l1 6 l2 2 v3 h-11 l-1 -3 l-2 -1 z" fill="#b89868"/><path d="M1187 301 l1 10 M1190 300 l2 12 M1193 302 l2 10" stroke="#9c7c4c" stroke-width="0.800"/>
<path d="M1212.500 308 l8 -4 l8.500 4 l-8.500 5 z" fill="#c02018"/><path d="M1217 307.500 l4 -2 l4 2 l-4 2.500 z" fill="#f0d890"/><path d="M1212.500 302.500 l8 -4 l8.500 4 l-8.500 5 z" fill="#7080d8"/>
<path d="M1242.500 299 h8 l4.500 4 v11 h-12.500 z" fill="#8ca0b8"/><path d="M1250 296.500 q3 0 3 3" fill="none" stroke="#c8c8c8" stroke-width="1.200"/>
<circle cx="1249" cy="305" r="3.6" fill="url(#gbulb)"/><path d="M1247 307.6 h4 l-0.500 2.500 h-3 z" fill="#e8a820"/><rect x="1247.4" y="309.90000000000003" width="3.200" height="3" fill="#3c2c14"/>
<rect x="1270" y="299.500" width="14" height="14" fill="#0a0a0a"/><circle cx="1274" cy="302.500" r="1.400" fill="#9a9a9a"/><circle cx="1280" cy="302.500" r="1.400" fill="#9a9a9a"/><circle cx="1277" cy="304.500" r="2.400" fill="#a8a8a8"/><ellipse cx="1277" cy="309.500" rx="4" ry="3.600" fill="#b4b4b4"/><circle cx="1273" cy="308" r="1.500" fill="#c0c0c0"/><circle cx="1281" cy="308" r="1.500" fill="#c0c0c0"/><text x="1280.500" y="306.500" font-family="Liberation Sans,sans-serif" font-size="5" font-weight="bold" fill="#eee">T</text>
<path d="M1299.0 304 h10 l-1.300 9 h-7.400 z" fill="#4878e0"/><ellipse cx="1304.0" cy="304" rx="5.300" ry="2" fill="#a4c0f4" stroke="#3868d0" stroke-width="0.800"/><path d="M1301.5 307 v5" stroke="#88a8f0" stroke-width="1.200"/>
<rect x="1323.500" y="298.5" width="17" height="16" fill="#f4f0e0" stroke="#e8e0c0" stroke-width="1"/><path d="M1323.500 314.5 V298.5 H1340.500" fill="none" stroke="#d8a848" stroke-width="1"/>
<circle cx="1335" cy="303.5" r="4.5" fill="url(#gbulb)"/><path d="M1333 307.0 h4 l-0.500 2.500 h-3 z" fill="#e8a820"/><rect x="1333.4" y="309.3" width="3.200" height="3" fill="#3c2c14"/>
<circle cx="1329" cy="305.5" r="4.5" fill="url(#gbulb)"/><path d="M1327 309.0 h4 l-0.500 2.500 h-3 z" fill="#e8a820"/><rect x="1327.4" y="311.3" width="3.200" height="3" fill="#3c2c14"/>
<rect x="1287.500" y="116.500" width="17" height="17" fill="#d0d0d0" stroke="#f8f8f8" stroke-width="1"/><path d="M1287.500 133.500 H1304.500 V116.500" fill="none" stroke="#808080" stroke-width="1"/>
<path d="M1291 132 q0 -6 5 -6 q5 0 5 6 z" fill="#a4a4a4"/><circle cx="1296.500" cy="122.500" r="3" fill="none" stroke="#9a9a9a" stroke-width="1.500"/><path d="M1296.500 132 v-5 M1294.500 129 l2 -2.500 l2 2.500" stroke="#222" stroke-width="1.200" fill="none"/>
<rect x="1323.500" y="116.500" width="17" height="17" fill="#d0d0d0" stroke="#f8f8f8" stroke-width="1"/><path d="M1323.500 133.500 H1340.500 V116.500" fill="none" stroke="#909090" stroke-width="1"/>
<circle cx="1332" cy="123" r="4.6" fill="url(#gbulb)"/><path d="M1330 126.6 h4 l-0.500 2.500 h-3 z" fill="#e8a820"/><rect x="1330.4" y="128.9" width="3.200" height="3" fill="#3c2c14"/>
<rect x="1323.500" y="324.500" width="17" height="17" fill="#d4d4d4" stroke="#f8f8f8" stroke-width="1"/><path d="M1323.500 341.500 H1340.500 V324.500" fill="none" stroke="#909090" stroke-width="1"/>
<circle cx="1332" cy="331" r="4.6" fill="url(#gbulb)"/><path d="M1330 334.6 h4 l-0.500 2.500 h-3 z" fill="#e8a820"/><rect x="1330.4" y="336.90000000000003" width="3.200" height="3" fill="#3c2c14"/>
<rect x="1106" y="217" width="16" height="16" fill="#5c5c2c"/><rect x="1106" y="217" width="16" height="5.6" fill="#c0c078"/><path d="M1107.6 233 L1109.2 222.6 Q1114.0 216.2 1118.8 222.6 L1120.4 233 Z" fill="#2a1a0c"/><ellipse cx="1114.0" cy="222.76" rx="2.56" ry="3.2" fill="#e0b880"/><path d="M1110.0 233 Q1114.0 225.8 1118.0 233 Z" fill="#d8b070"/>
<path d="M1113 337 q1 -11 10 -11 q8 1 9 8 l-4 3 q-2 -7 -8 -6 q-4 1 -5 7 z" fill="#c8a850"/><path d="M1115 338 q1 -7 6 -7 q5 0 7 6 q-6 4 -13 1 z" fill="#8888d0"/><path d="M1113 337 q8 6 15 0" fill="none" stroke="#b0b0b0" stroke-width="1"/>
</g>
<path d="M1306.500 117 V133.500 H1322" fill="none" stroke="#111" stroke-width="1" stroke-dasharray="2 1.200"/><path d="M1320.500 118.500 L1312 127.500" stroke="#0a0a0a" stroke-width="2.400"/><path d="M1309 131 l1.500 -7.500 l6 6 z" fill="#0a0a0a"/>
<path d="M1111.500 340 h7 M1115 336.500 v7" stroke="#111" stroke-width="1.100"/>
<path d="M1139.500 329.500 l4.500 4.500 l-4.500 4.500 z" fill="#111"/>
<rect x="1312" y="141.5" width="12" height="11.500" rx="1.500" fill="#1c4ca4"/>
<path d="M1318 151.0 V144.5 M1315 147.0 L1318 144.0 L1321 147.0" fill="none" stroke="#fff" stroke-width="1.700"/>
<rect x="1330" y="141.5" width="12" height="11.500" rx="1.500" fill="#1c4ca4"/>
<path d="M1336 143.5 V150.0 M1333 147.5 L1336 150.5 L1339 147.5" fill="none" stroke="#fff" stroke-width="1.700"/>
<rect x="1312" y="349" width="12" height="11.500" rx="1.500" fill="#1c4ca4"/>
<path d="M1318 358.5 V352 M1315 354.5 L1318 351.5 L1321 354.5" fill="none" stroke="#fff" stroke-width="1.700"/>
<rect x="1330" y="349" width="12" height="11.500" rx="1.500" fill="#1c4ca4"/>
<path d="M1336 351 V357.5 M1333 355 L1336 358 L1339 355" fill="none" stroke="#fff" stroke-width="1.700"/>
</svg>
<svg style="left:1095px;top:721px" width="270" height="26"><rect width="270" height="26" filter="url(#nz)"/></svg>
<div style="left:1192px;top:721px;width:173px;height:1px;background:#a4a4a4;"></div>
<div style="left:1094px;top:746px;width:272px;height:1px;background:#a0a0a0;"></div>
<div style="left:1095px;top:721px;width:49px;height:25px;background:#f0f0f0;border-radius:0 0 5px 0"></div>
<div style="left:1143px;top:721px;width:49px;height:25px;background:#f6f6f6;border:1px solid #9c9c9c;border-top:1px solid #a4a4a4;border-radius:2px 2px 5px 5px"></div>
<div class="t" style="left:1102.5px;top:727px;font-size:12px;line-height:12px;color:#111;font-size:12.5px;transform:scaleX(0.88);transform-origin:0 0;">Layers</div>
<div class="t" style="left:1151.5px;top:728px;font-size:12px;line-height:12px;color:#111;font-size:12.5px;transform:scaleX(0.92);transform-origin:0 0;">Add In</div>
<div style="left:0px;top:747px;width:1366px;height:21px;background:#f0f0f0;"></div>
<div style="left:1023px;top:751px;width:66px;height:17px;background:#f0f0f0;border-top:1px solid #a0a0a0;border-left:1px solid #a0a0a0;border-right:1px solid #fff"></div>
<div style="left:1092px;top:751px;width:66px;height:17px;background:#f0f0f0;border-top:1px solid #a0a0a0;border-left:1px solid #a0a0a0;border-right:1px solid #fff"></div>
<div style="left:1161px;top:751px;width:61px;height:17px;background:#f0f0f0;border-top:1px solid #a0a0a0;border-left:1px solid #a0a0a0;border-right:1px solid #fff"></div>
<div style="left:1225px;top:751px;width:69px;height:17px;background:#f0f0f0;border-top:1px solid #a0a0a0;border-left:1px solid #a0a0a0;border-right:1px solid #fff"></div>
<div style="left:1297px;top:751px;width:69px;height:17px;background:#f0f0f0;border-top:1px solid #a0a0a0;border-left:1px solid #a0a0a0;border-right:1px solid #fff"></div>
<div class="t" style="left:1025px;top:754px;font-size:12px;line-height:12px;color:#111;transform:scaleX(0.86);transform-origin:0 0;font-size:12.5px;">X: 1368.641</div>
<div class="t" style="left:1094.5px;top:754px;font-size:12px;line-height:12px;color:#111;transform:scaleX(0.875);transform-origin:0 0;font-size:12.5px;">Y: -736.127</div>
</body></html>
